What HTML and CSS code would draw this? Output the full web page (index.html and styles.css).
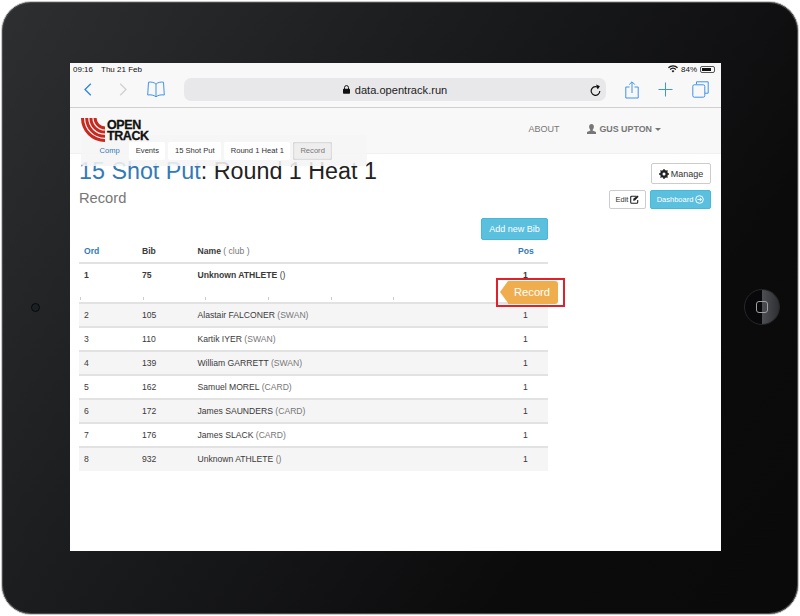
FILE: index.html

```html
<!DOCTYPE html>
<html lang="en">
<head>
    <meta charset="UTF-8">
    <title>OpenTrack - Record</title>
    <link rel="stylesheet" href="styles.css">
</head>
<body>
    <div class="tablet">
        <div class="camera"></div>
        <div class="home-btn"><span class="home-square"></span></div>
        <div class="screen">
            <div class="status-bar">
                <span class="status-time">09:16</span>
                <span class="status-date">Thu 21 Feb</span>
                <span class="status-right">
                    <svg class="wifi" width="10" height="8" viewBox="0 0 10 8"><path d="M5 7.600 3.600 6a2 2 0 0 1 2.800 0zM2.600 5 1.700 4a4.800 4.800 0 0 1 6.600 0l-.9 1a3.500 3.500 0 0 0-4.800 0zM.9 3.200 0 2.200a7.300 7.300 0 0 1 10 0l-.9 1a6 6 0 0 0-8.200 0z" fill="#111"/></svg>
                    <span>84%</span>
                    <span class="battery"><span class="battery-fill"></span></span>
                </span>
            </div>
            <div class="toolbar">
                <svg class="tool-back" width="8" height="13" viewBox="0 0 8 13"><path d="M6.800.8 1 6.500l5.800 5.700" fill="none" stroke="#2b84ee" stroke-width="1.300"/></svg>
                <svg class="tool-forward" width="8" height="13" viewBox="0 0 8 13"><path d="M1.200.8 7 6.500l-5.800 5.700" fill="none" stroke="#cfd0d3" stroke-width="1.300"/></svg>
                <svg class="tool-book" width="18" height="17" viewBox="0 0 18 17"><path d="M9 3.200C7.500 1.400 4.500.8 1.500 1.200L.7 14c3-.4 6-.1 8.300 1.800 2.300-1.900 5.300-2.200 8.300-1.800l-.8-12.800C13.500.8 10.500 1.400 9 3.200zM9 3.200v12.600" fill="none" stroke="#3f92ee" stroke-width="1"/></svg>
                <div class="url-bar">
                    <span class="url-text">
                        <svg width="7" height="9" viewBox="0 0 7 9"><path d="M1.500 4V2.600a2 2 0 0 1 4 0V4" fill="none" stroke="#111" stroke-width="1"/><rect y="3.800" width="7" height="5" rx=".8" fill="#111"/></svg>
                        data.opentrack.run
                    </span>
                    <svg class="reload" width="11" height="12" viewBox="0 0 11 12"><path d="M8.800 4.200A4.300 4.300 0 1 0 9.800 7" fill="none" stroke="#111" stroke-width="1.200"/><path d="M6.200.5 10 2.200 7.300 5.200z" fill="#111"/></svg>
                </div>
                <svg class="tool-share" width="14" height="18" viewBox="0 0 14 18"><path d="M4.500 6H.8v11h12.400V6H9.500M7 12V1M4.200 3.600 7 .8l2.800 2.800" fill="none" stroke="#3f92ee" stroke-width="1"/></svg>
                <svg class="tool-plus" width="15" height="15" viewBox="0 0 15 15"><path d="M7.500.5v14M.5 7.500h14" fill="none" stroke="#3f92ee" stroke-width="1"/></svg>
                <svg class="tool-tabs" width="17" height="17" viewBox="0 0 17 17"><path d="M4.500 3V.8h11.700v11.400H13" fill="none" stroke="#3f92ee" stroke-width="1"/><rect x=".8" y="3.800" width="12" height="12.400" rx="1.500" fill="none" stroke="#3f92ee" stroke-width="1"/></svg>
            </div>

            <nav class="navbar">
                <a class="logo">
                    <svg width="24" height="24" viewBox="0 0 24 24"><g fill="none" stroke="#c8281e" stroke-width="3"><path d="M1.500 0A22.500 22.500 0 0 0 24 22.500"/><path d="M5.700 0A18.300 18.300 0 0 0 24 18.300"/><path d="M9.900 0A14.100 14.100 0 0 0 24 14.100"/><path d="M14.100 0A9.900 9.900 0 0 0 24 9.900"/></g></svg>
                    <span class="logo-text">OPEN<br>TRACK</span>
                </a>
                <div class="nav-links">
                    <span class="nav-about">ABOUT</span>
                    <span class="nav-user">
                        <svg width="9" height="10" viewBox="0 0 9 10"><path d="M4.500 0C6 0 6.900 1.200 6.900 2.800S6 5.500 5.600 5.900v.7L9 8v2H0V8l3.400-1.400v-.7C3 5.500 2.100 4.400 2.100 2.800S3 0 4.500 0z" fill="#777"/></svg>
                        GUS UPTON
                        <span class="caret"></span>
                    </span>
                </div>
            </nav>

            <div class="breadcrumbs">
                <span class="crumb crumb-link">Comp</span>
                <span class="crumb">Events</span>
                <span class="crumb">15 Shot Put</span>
                <span class="crumb">Round 1 Heat 1</span>
                <span class="crumb crumb-active">Record</span>
            </div>

            <main class="content">
                <div class="page-head">
                    <div>
                        <h1 class="page-title"><a>15 Shot Put</a>: Round 1 Heat 1</h1>
                        <h2 class="page-sub">Record</h2>
                    </div>
                    <div class="head-actions">
                        <button class="btn btn-manage">
                            <svg width="10" height="10" viewBox="0 0 10 10"><circle cx="5" cy="5" r="3" fill="none" stroke="#222" stroke-width="1.800"/><path d="M5 0v10M0 5h10M1.500 1.500l7 7M8.500 1.500l-7 7" stroke="#222" stroke-width="1.300"/><circle cx="5" cy="5" r="1.500" fill="#fff"/></svg>
                            Manage
                        </button>
                        <div class="btn-row">
                            <button class="btn btn-small">Edit
                                <svg width="9" height="9" viewBox="0 0 9 9"><path d="M6.500 1.200H1.700a1 1 0 0 0-1 1v5a1 1 0 0 0 1 1h5a1 1 0 0 0 1-1V5" fill="none" stroke="#222" stroke-width="1.100"/><path d="M3.300 3.800 7.500.6 8.600 1.700 5 5.500l-1.800.3z" fill="#222"/></svg>
                            </button>
                            <button class="btn btn-small btn-info">Dashboard
                                <svg width="9" height="9" viewBox="0 0 9 9"><circle cx="4.500" cy="4.500" r="3.800" fill="none" stroke="#fff" stroke-width="1"/><path d="M2.500 4.500h4M4.800 3l1.600 1.500L4.800 6" fill="none" stroke="#fff" stroke-width="1"/></svg>
                            </button>
                        </div>
                    </div>
                </div>

                <div class="results">
                    <div class="results-actions">
                        <button class="btn btn-info btn-add">Add new Bib</button>
                    </div>
                    <div class="row row-head">
                        <span class="cell-link">Ord</span>
                        <span>Bib</span>
                        <span>Name <em>( club )</em></span>
                        <span class="cell-pos cell-link">Pos</span>
                    </div>
                    <div class="row-current">
                        <div class="row row-bold">
                            <span>1</span>
                            <span>75</span>
                            <span>Unknown ATHLETE <em class="em-dark">()</em></span>
                            <span class="cell-pos">1</span>
                        </div>
                        <div class="ticks">
                            <i></i><i></i><i></i><i></i><i></i><i></i>
                        </div>
                    </div>
                    <div class="row row-item row-odd"><span>2</span><span>105</span><span>Alastair FALCONER <em>(SWAN)</em></span><span class="cell-pos">1</span></div>
                    <div class="row row-item"><span>3</span><span>110</span><span>Kartik IYER <em>(SWAN)</em></span><span class="cell-pos">1</span></div>
                    <div class="row row-item row-odd"><span>4</span><span>139</span><span>William GARRETT <em>(SWAN)</em></span><span class="cell-pos">1</span></div>
                    <div class="row row-item"><span>5</span><span>162</span><span>Samuel MOREL <em>(CARD)</em></span><span class="cell-pos">1</span></div>
                    <div class="row row-item row-odd"><span>6</span><span>172</span><span>James SAUNDERS <em>(CARD)</em></span><span class="cell-pos">1</span></div>
                    <div class="row row-item"><span>7</span><span>176</span><span>James SLACK <em>(CARD)</em></span><span class="cell-pos">1</span></div>
                    <div class="row row-item row-odd row-last"><span>8</span><span>932</span><span>Unknown ATHLETE <em>()</em></span><span class="cell-pos">1</span></div>

                    <div class="callout">
                        <span class="callout-tag">Record</span>
                    </div>
                </div>
            </main>
        </div>
    </div>
</body>
</html>
```

FILE: styles.css

```css
* { box-sizing: border-box; }
body {
    margin: 0;
    width: 800px;
    height: 616px;
    background: #fff;
    font-family: "Liberation Sans", Arial, sans-serif;
    overflow: hidden;
}
.tablet {
    position: relative;
    width: 798px;
    height: 614px;
    margin: 1px;
    padding: 61px 0 0 68px;
    background: linear-gradient(125deg, #2e2f31 0%, #1c1d1f 35%, #0b0b0c 75%, #0a0a0b 100%);
    border: 1px solid #c9c9c9;
    border-radius: 30px;
    box-shadow: inset 0 0 0 1px #4a4a4a;
}
.camera {
    position: absolute;
    left: 29px;
    top: 301px;
    width: 9px;
    height: 9px;
    border-radius: 50%;
    background: #1c2024;
    border: 1px solid #080808;
}
.home-btn {
    position: absolute;
    left: 742px;
    top: 287px;
    width: 36px;
    height: 36px;
    display: flex;
    align-items: center;
    justify-content: center;
    border-radius: 50%;
    background: linear-gradient(90deg, #08080a 50%, #4e4f53 50%, #2e2f32 100%);
    border: 1px solid #26272a;
}
.home-square {
    width: 12px;
    height: 12px;
    border: 1px solid #a0a1a4;
    border-radius: 3px;
}
.screen {
    position: relative;
    width: 651px;
    height: 488px;
    background: #fff;
    overflow: hidden;
}

/* ios chrome */
.status-bar {
    display: flex;
    height: 12px;
    align-items: center;
    padding: 0 6px 0 3px;
    background: #f8f8f8;
    font-size: 8px;
    color: #111;
}
.status-date { margin-left: 8px; }
.status-right {
    margin-left: auto;
    display: flex;
    align-items: center;
    gap: 3px;
}
.battery {
    width: 15px;
    height: 7px;
    padding: 1px;
    border: 1px solid #555;
    border-radius: 2px;
}
.battery-fill {
    display: block;
    width: 84%;
    height: 100%;
    background: #111;
}
.toolbar {
    display: flex;
    align-items: center;
    height: 33px;
    padding: 0 0 3px 14px;
    background: #f8f8f8;
    border-bottom: 1px solid #cfcfcf;
}
.toolbar > * { flex: none; }
.tool-forward { margin-left: 27px; }
.tool-book { margin-left: 20px; }
.url-bar {
    display: flex;
    position: relative;
    align-items: center;
    justify-content: center;
    width: 422px;
    height: 23px;
    margin-left: 19px;
    background: #e8e8ea;
    border-radius: 7px;
    font-size: 11.100px;
    color: #222;
}
.url-text {
    display: flex;
    align-items: center;
    gap: 5px;
}
.reload {
    position: absolute;
    right: 5px;
    top: 6px;
}
.tool-share { margin-left: 19px; }
.tool-plus { margin-left: 19px; }
.tool-tabs { margin-left: 19px; }

/* site nav */
.navbar {
    display: flex;
    height: 46px;
    padding: 10px 0 0 11px;
    background: #f8f8f8;
    border-bottom: 1px solid #f0f0f0;
}
.logo {
    position: relative;
    z-index: 1;
    display: flex;
    gap: 2px;
    height: 24px;
}
.logo-text {
    font-size: 12.500px;
    line-height: 11px;
    font-weight: bold;
    color: #111;
    padding-top: 2px;
    letter-spacing: -0.4px;
    -webkit-text-stroke: 0.3px #111;
}
.nav-links {
    margin-left: auto;
    display: flex;
    align-items: flex-start;
    padding: 6px 60px 0 0;
    font-size: 9px;
    color: #777;
}
.nav-about { width: 59px; }
.nav-user {
    display: flex;
    align-items: center;
    gap: 3px;
    font-size: 8.900px;
    font-weight: bold;
}
.caret {
    border-top: 3px solid #777;
    border-left: 3px solid transparent;
    border-right: 3px solid transparent;
}
.breadcrumbs {
    position: absolute;
    left: 11px;
    top: 72px;
    width: 286px;
    height: 31px;
    display: flex;
    align-items: center;
    gap: 3px;
    padding-left: 12px;
    background: rgba(245, 245, 245, 0.88);
    border-radius: 3px;
    font-size: 7.600px;
    color: #333;
}
.crumb {
    height: 18px;
    line-height: 18px;
    padding: 0 6.500px;
    background: #fff;
    border-radius: 2px;
}
.crumb-link {
    background: none;
    color: #337ab7;
}
.crumb-active {
    padding: 0 7px;
    background: #eee;
    color: #777;
    box-shadow: inset 0 0 2px #aaa;
}

/* page */
.content { padding: 0 10px 0 9px; }
.page-head {
    display: flex;
    justify-content: space-between;
    padding-top: 4px;
}
.page-title {
    margin: 0;
    font-size: 23.300px;
    line-height: 26px;
    font-weight: normal;
    color: #222;
}
.page-title a { color: #337ab7; }
.page-sub {
    margin: 5px 0 0;
    font-size: 14.700px;
    line-height: 18px;
    font-weight: normal;
    color: #777;
}
.head-actions {
    display: flex;
    flex-direction: column;
    align-items: flex-end;
    gap: 6px;
    margin-top: 5px;
}
.btn-row {
    display: flex;
    gap: 4px;
}
.btn {
    display: flex;
    align-items: center;
    justify-content: center;
    gap: 2px;
    padding: 0;
    background: #fff;
    border: 1px solid #ccc;
    border-radius: 2px;
    color: #333;
    font-family: inherit;
}
.btn-manage {
    width: 60px;
    height: 21px;
    font-size: 9px;
}
.btn-small {
    width: 37px;
    height: 19px;
    font-size: 7.500px;
}
.btn-info {
    background: #5bc0de;
    border-color: #46b8da;
    color: #fff;
}
.btn-row .btn-info { width: 61px; }
.btn-add {
    width: 67px;
    height: 22px;
    font-size: 9px;
}
.results {
    position: relative;
    width: 469px;
    margin-top: 9px;
}
.results-actions {
    display: flex;
    justify-content: flex-end;
}
.row {
    display: grid;
    grid-template-columns: 58px 55.500px 1fr 24px;
    align-items: center;
    padding: 0 10px 0 5px;
    font-size: 8.600px;
    color: #3a3a3a;
}
.row em {
    font-style: normal;
    color: #777;
}
.row .em-dark {
    color: #3a3a3a;
    font-weight: normal;
}
.row-head {
    height: 24px;
    font-weight: bold;
    border-bottom: 2px solid #e2e2e2;
}
.row-head em { font-weight: normal; }
.cell-link { color: #337ab7; }
.cell-pos { padding-left: 9px; }
.row-head .cell-pos { padding-left: 4px; }
.row-current { height: 38px; }
.row-bold {
    height: 22px;
    font-weight: bold;
}
.ticks {
    display: flex;
    gap: 61.700px;
    padding: 11px 0 0 1px;
}
.ticks i {
    width: 1px;
    height: 3px;
    background: #ccc;
}
.row-item {
    height: 24px;
    border-top: 2px solid #e2e2e2;
}
.row-odd { background: #f5f5f5; }
.row-last {
    height: 25px;
    padding-bottom: 1px;
}
.callout {
    position: absolute;
    left: 417px;
    top: 60px;
    width: 69px;
    height: 29px;
    padding: 1px 0 0 2px;
    border: 2px solid #e2202c;
}
.callout-tag {
    display: block;
    position: relative;
    width: 50px;
    height: 23px;
    margin-left: 8px;
    padding-left: 6px;
    background: #f0ad4e;
    border-radius: 0 3px 3px 0;
    color: #fff;
    font-size: 11.200px;
    line-height: 23px;
}
.callout-tag::before {
    content: "";
    position: absolute;
    left: -8px;
    top: 0;
    border-top: 11.500px solid transparent;
    border-bottom: 11.500px solid transparent;
    border-right: 8px solid #f0ad4e;
}
```
